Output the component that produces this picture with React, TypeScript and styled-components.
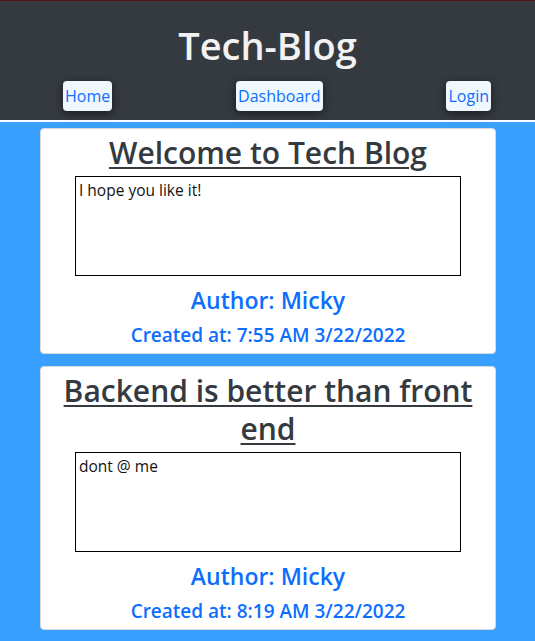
import styled, { createGlobalStyle } from "styled-components";

interface IPost {
  id: number;
  title: string;
  content: string;
  author: string;
  createdAt: string;
}

const posts: IPost[] = [
  {
    id: 1,
    title: "Welcome to Tech Blog",
    content: "I hope you like it!",
    author: "Micky",
    createdAt: "7:55 AM 3/22/2022",
  },
  {
    id: 2,
    title: "Backend is better than front end",
    content: "dont @ me",
    author: "Micky",
    createdAt: "8:19 AM 3/22/2022",
  },
];

const GlobalStyle = createGlobalStyle`
  * {
    box-sizing: border-box;
  }
  body {
    margin: 0;
    background-color: #39a0ff;
    font-family: "Open Sans", "Noto Sans", sans-serif;
  }
`;

const Header = styled.header`
  background-color: #343a40;
  border-top: 1px solid #5a1010;
  border-bottom: 2px solid #ffffff;
  padding: 20px 0 9px;
`;

const SiteTitle = styled.h1`
  margin: 0;
  text-align: center;
  color: #f2f2f2;
  font-size: 38px;
  font-weight: 600;
  line-height: 48px;
`;

const Nav = styled.nav`
  display: flex;
  justify-content: space-between;
  align-items: center;
  padding: 0 44px 0 63px;
  margin-top: 12px;
`;

const NavButton = styled.a`
  display: inline-flex;
  align-items: center;
  height: 30px;
  padding: 0 2px;
  background-color: #f0f8ff;
  color: #0d6efd;
  font-size: 16px;
  border-radius: 4px;
  box-shadow: 0 2px 8px rgba(0, 0, 0, 0.55);
  text-decoration: none;
  cursor: pointer;
`;

const Main = styled.main`
  display: flex;
  flex-direction: column;
  gap: 12px;
  padding: 6px 39px 11px 40px;
`;

const Card = styled.article`
  background-color: #ffffff;
  border: 1px solid #d8d8d8;
  border-radius: 4px;
  padding: 5px 0 6px;
  text-align: center;
`;

const PostTitle = styled.h2`
  margin: 0 auto;
  max-width: 420px;
  color: #343a40;
  font-size: 30px;
  font-weight: 600;
  line-height: 38px;
  text-decoration: underline;
  text-decoration-thickness: 2px;
  text-underline-offset: 3px;
`;

const ContentBox = styled.div`
  width: 386px;
  height: 100px;
  margin: 4px auto 0;
  padding: 3px 3px;
  border: 1px solid #000000;
  text-align: left;
  color: #111111;
  font-size: 15.5px;
  line-height: 20px;
`;

const Author = styled.h3`
  margin: 10px 0 0;
  color: #0d6efd;
  font-size: 23px;
  font-weight: 600;
  line-height: 29px;
`;

const CreatedAt = styled.h4`
  margin: 8px 0 0;
  color: #0d6efd;
  font-size: 19px;
  font-weight: 600;
  line-height: 24px;
`;

export default function App() {
  return (
    <>
      <GlobalStyle />
      <Header>
        <SiteTitle>Tech-Blog</SiteTitle>
        <Nav>
          <NavButton>Home</NavButton>
          <NavButton>Dashboard</NavButton>
          <NavButton>Login</NavButton>
        </Nav>
      </Header>
      <Main>
        {posts.map((post) => (
          <Card key={post.id}>
            <PostTitle>{post.title}</PostTitle>
            <ContentBox>{post.content}</ContentBox>
            <Author>Author: {post.author}</Author>
            <CreatedAt>Created at: {post.createdAt}</CreatedAt>
          </Card>
        ))}
      </Main>
    </>
  );
}
